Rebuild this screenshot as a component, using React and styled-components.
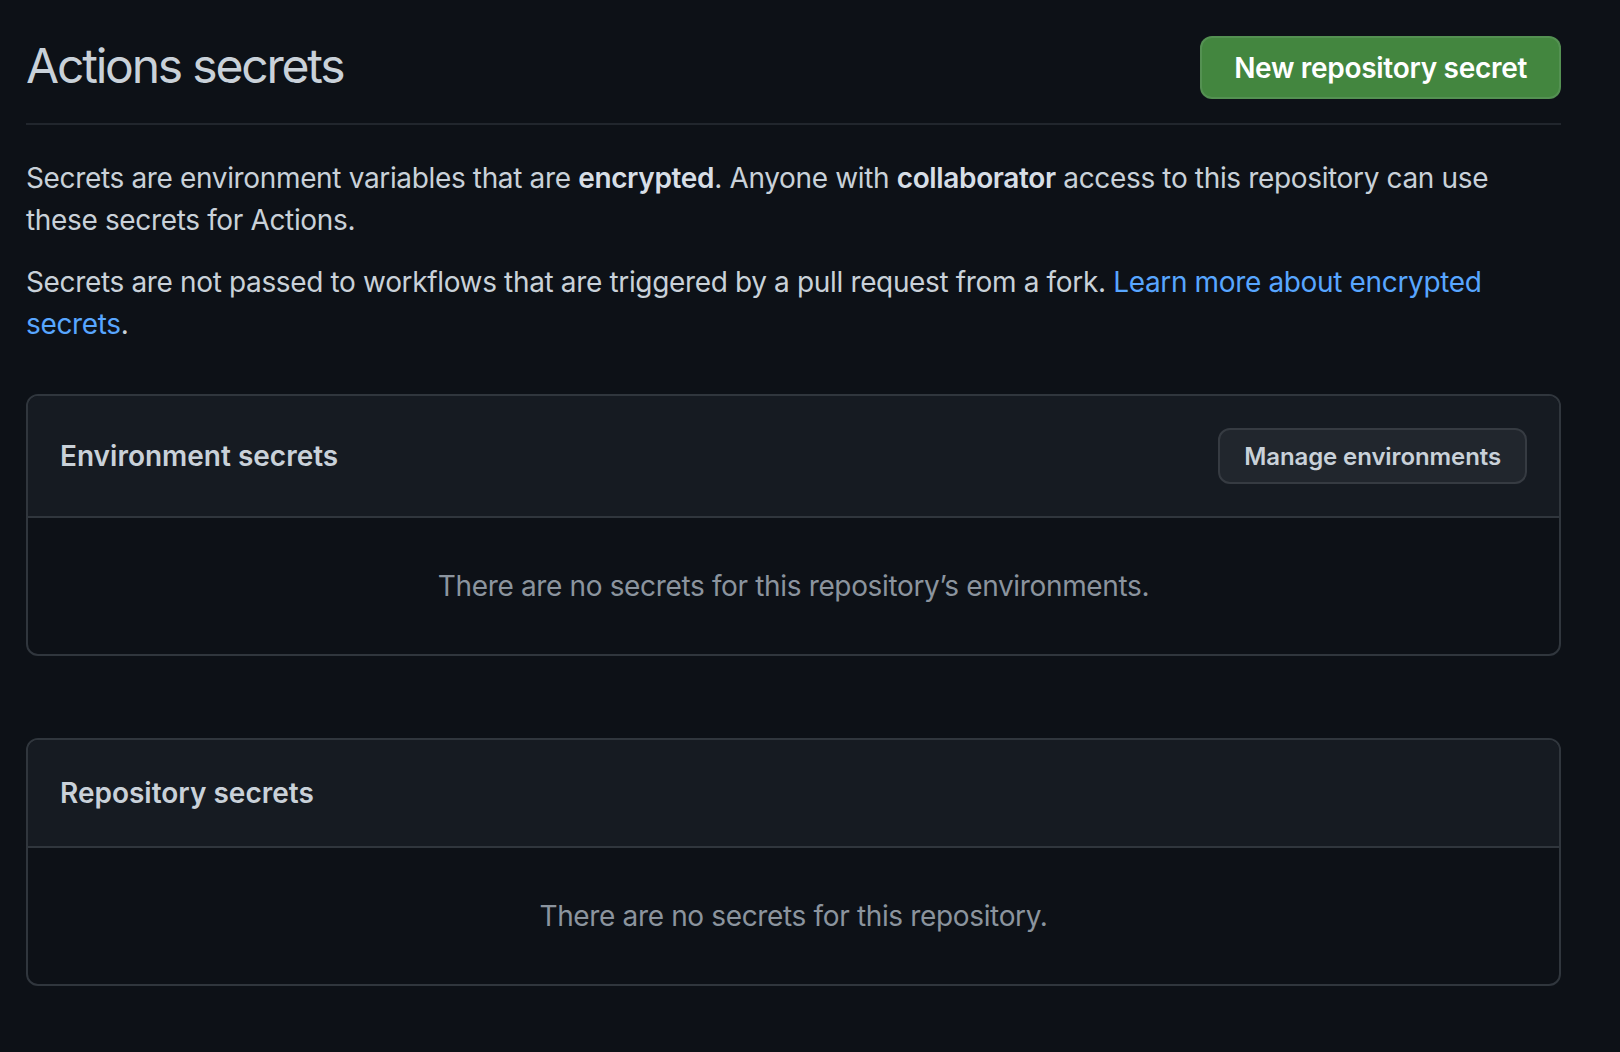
import React from 'react';
import styled, { createGlobalStyle } from 'styled-components';

const GlobalStyle = createGlobalStyle`
  * { box-sizing: border-box; }
  html, body {
    margin: 0;
    background: #0d1117;
    color: #c9d1d9;
    font-family: Inter, "Noto Sans", "Liberation Sans", sans-serif;
  }
`;

const Page = styled.div`
  min-height: 1052px;
  padding: 28px 59px 40px 26px;
`;

const Subhead = styled.div`
  display: flex;
  align-items: center;
  padding-bottom: 16px;
  margin-bottom: 32px;
  border-bottom: 2px solid #21262d;
`;

const Heading = styled.h2`
  flex: 1 1 auto;
  margin: 0 0 4px;
  font-size: 48px;
  font-weight: 400;
  line-height: 72px;
  letter-spacing: -2.2px;
  color: #c9d1d9;
`;

const PrimaryButton = styled.button`
  height: 63px;
  margin: 8px 0;
  padding: 0 32px;
  border: 2px solid rgba(240, 246, 252, 0.1);
  border-radius: 12px;
  background: #43863f;
  color: #ffffff;
  font-family: inherit;
  font-size: 28px;
  font-weight: 600;
  letter-spacing: -0.3px;
  cursor: pointer;
`;

const Text = styled.p`
  margin: 0 0 20px;
  font-size: 28px;
  line-height: 42px;
  letter-spacing: -0.35px;
  color: #c9d1d9;

  strong {
    font-weight: 600;
    color: #d7dee6;
  }
`;

const Link = styled.a`
  color: #58a6ff;
  text-decoration: none;
`;

const Box = styled.div`
  margin-top: ${p => p.$gap}px;
  border: 2px solid #30363d;
  border-radius: 12px;
  overflow: hidden;
`;

const BoxHeader = styled.div`
  display: flex;
  align-items: center;
  justify-content: space-between;
  padding: 32px;
  background: #161b22;
  border-bottom: 2px solid #30363d;
`;

const BoxTitle = styled.h3`
  margin: 0;
  font-size: 28px;
  line-height: 42px;
  font-weight: 600;
  letter-spacing: 0;
  color: #c9d1d9;
`;

const Button = styled.button`
  height: 56px;
  padding: 0 24px;
  border: 2px solid #363b42;
  border-radius: 12px;
  background: #21262d;
  color: #c9d1d9;
  font-family: inherit;
  font-size: 24px;
  font-weight: 600;
  letter-spacing: -0.1px;
  cursor: pointer;
`;

const EmptyMessage = styled.div`
  padding: 47px 32px;
  text-align: center;
  font-size: 28px;
  line-height: 42px;
  letter-spacing: -0.35px;
  color: #8b949e;
`;

export default function App() {
  return (
    <>
      <GlobalStyle />
      <Page>
        <Subhead>
          <Heading>Actions secrets</Heading>
          <PrimaryButton>New repository secret</PrimaryButton>
        </Subhead>

        <Text>
          Secrets are environment variables that are <strong>encrypted</strong>. Anyone with{' '}
          <strong>collaborator</strong> access to this repository can use these secrets for Actions.
        </Text>
        <Text>
          Secrets are not passed to workflows that are triggered by a pull request from a fork.{' '}
          <Link href="#">Learn more about encrypted secrets</Link>.
        </Text>

        <Box $gap={49}>
          <BoxHeader>
            <BoxTitle>Environment secrets</BoxTitle>
            <Button>Manage environments</Button>
          </BoxHeader>
          <EmptyMessage>There are no secrets for this repository’s environments.</EmptyMessage>
        </Box>

        <Box $gap={82}>
          <BoxHeader>
            <BoxTitle>Repository secrets</BoxTitle>
          </BoxHeader>
          <EmptyMessage>There are no secrets for this repository.</EmptyMessage>
        </Box>
      </Page>
    </>
  );
}
